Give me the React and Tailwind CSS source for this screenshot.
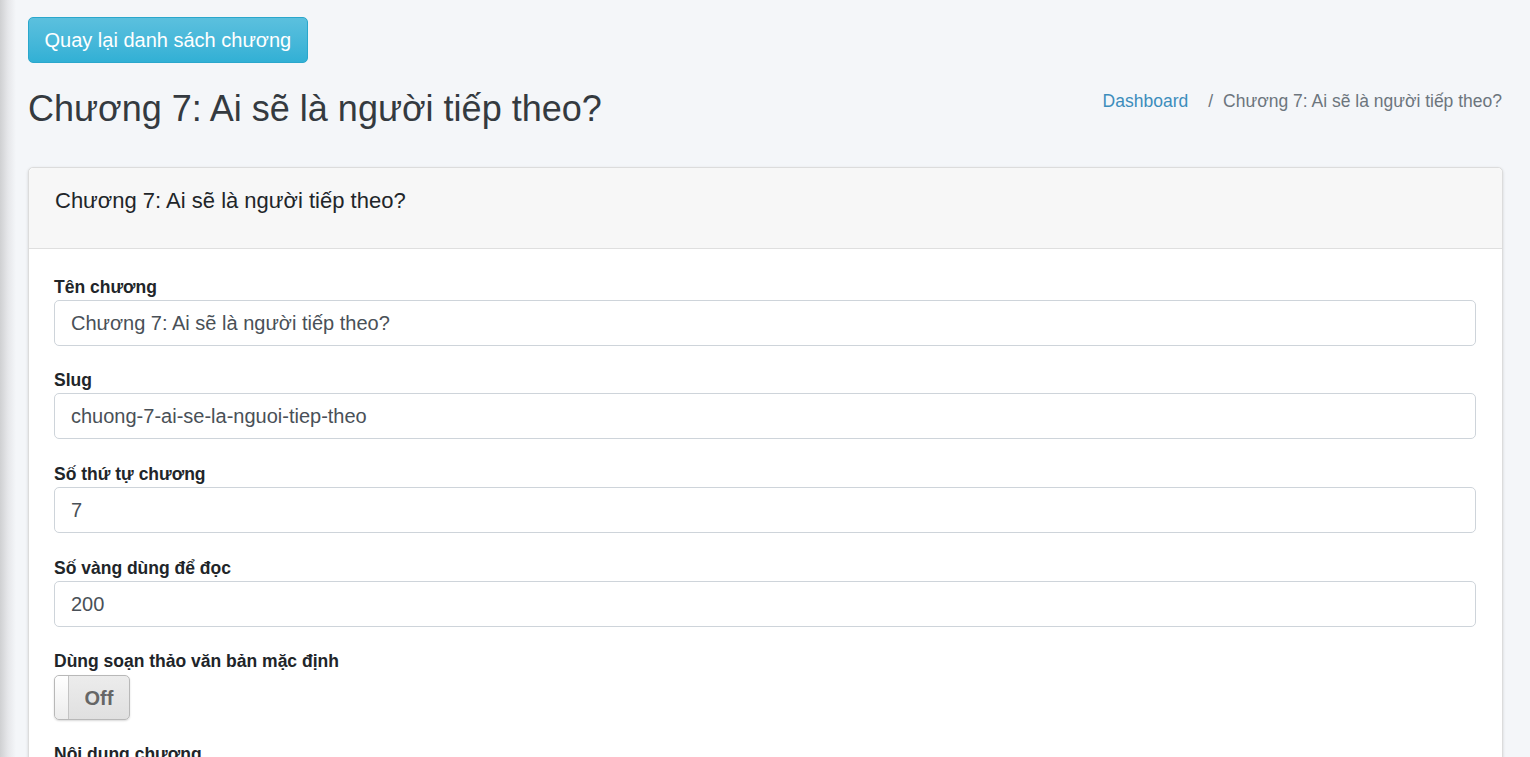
import React from "react";

const font = { fontFamily: '"Liberation Sans", Arial, sans-serif' };

function Field({ label, value }) {
  return (
    <div className="mb-[22.67px]">
      <label className="block text-[17.5px] leading-[24px] font-bold text-[#212529] mb-[1px]">{label}</label>
      <div className="h-[46px] border border-[#ced4da] rounded-[5px] bg-white px-[16px] flex items-center text-[20px] text-[#495057]">
        {value}
      </div>
    </div>
  );
}

export default function App() {
  return (
    <div className="min-h-[757px] bg-[#f4f6f9] flex" style={font}>
      <div className="w-[16px] shrink-0 bg-gradient-to-r from-[#cfd0d2] via-[#e6e7ea] to-[#f4f6f9]" />
      <div className="flex-1 pl-[12px] pr-[27px] pt-[17px]">
        <button className="h-[46px] px-[15.5px] rounded-[5px] border border-[#2aa7cc] bg-gradient-to-b from-[#5bc0de] to-[#31b0d5] text-white text-[20px] leading-none">
          Quay lại danh sách chương
        </button>
        <div className="flex items-start justify-between mt-[23.6px]">
          <h1 className="text-[36px] leading-[43.2px] text-[#343a40] font-normal">Chương 7: Ai sẽ là người tiếp theo?</h1>
          <div className="flex text-[17.5px] leading-[26px] pr-px pt-px">
            <span className="text-[#3c8dbc]">Dashboard</span>
            <span className="text-[#6c757d] ml-[20px] mr-[10px]">/</span>
            <span className="text-[#6c757d]">Chương 7: Ai sẽ là người tiếp theo?</span>
          </div>
        </div>
        <div className="mt-[37px] bg-white border border-[#dcdcdc] rounded-t-[5px] shadow-[0_1px_3px_rgba(0,0,0,0.15)]">
          <div className="h-[81px] bg-[#f7f7f7] border-b border-[#dfdfdf] rounded-t-[5px] pt-[20px] px-[26px]">
            <div className="text-[22px] leading-[26.4px] text-[#212529]">Chương 7: Ai sẽ là người tiếp theo?</div>
          </div>
          <div className="pt-[26px] pl-[25px] pr-[26px] pb-[20px]">
            <Field label="Tên chương" value="Chương 7: Ai sẽ là người tiếp theo?" />
            <Field label="Slug" value="chuong-7-ai-se-la-nguoi-tiep-theo" />
            <Field label="Số thứ tự chương" value="7" />
            <Field label="Số vàng dùng để đọc" value="200" />
            <div className="mb-[22px]">
              <label className="block text-[17.5px] leading-[24px] font-bold text-[#212529] mb-[2px]">Dùng soạn thảo văn bản mặc định</label>
              <div className="w-[76px] h-[45px] border border-[#b8b8b8] rounded-[5px] flex overflow-hidden bg-gradient-to-b from-[#ececec] to-[#e0e0e0] shadow-[0_1px_2px_rgba(0,0,0,0.15)]">
                <div className="w-[14px] h-full bg-gradient-to-b from-[#ffffff] to-[#ececec] border-r border-[#c4c4c4] rounded-l-[4px]" />
                <div className="flex-1 flex items-center justify-center text-[20px] font-bold text-[#666]">Off</div>
              </div>
            </div>
            <label className="block text-[17.5px] leading-[24px] font-bold text-[#212529] mb-[6px]">Nội dung chương</label>
            <div className="h-[200px]" />
          </div>
        </div>
      </div>
    </div>
  );
}
